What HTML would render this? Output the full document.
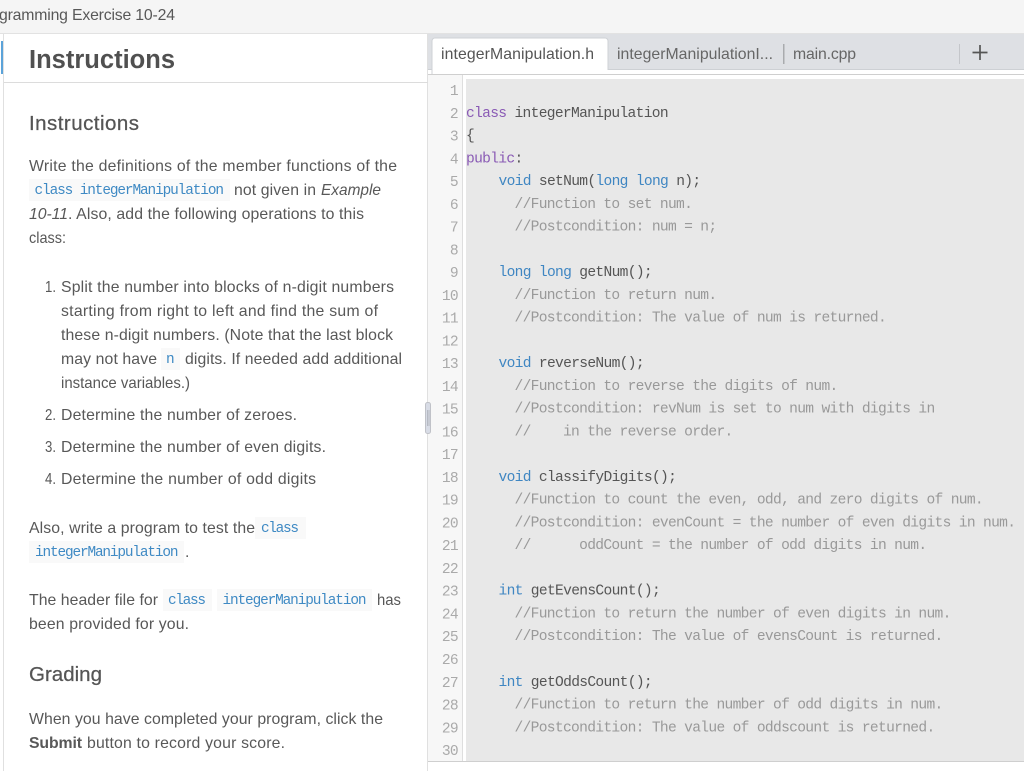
<!DOCTYPE html>
<html lang="en">
<head>
<meta charset="utf-8">
<title>Programming Exercise 10-24</title>
<style>
html,body{margin:0;padding:0;background:#fff;width:1024px;height:771px;overflow:hidden}
svg{display:block}
text{white-space:pre}
.s{font-family:"Liberation Sans",sans-serif;font-size:15.8px;fill:#585858}
.i{font-style:italic}
.b{font-weight:bold}
.c{font-family:"Liberation Mono",monospace;font-size:14.4px;fill:#3f8ac4}
.m{font-family:"Liberation Mono",monospace;font-size:14.6px;letter-spacing:-.68px;fill:#555}
.n{fill:#aaa;text-anchor:end}
.k{fill:#8a5bb5}
.t{fill:#3f86c2}
.g{fill:#999}
.h{font-family:"Liberation Sans",sans-serif;font-size:20.5px;fill:#555;stroke:#555;stroke-width:.25px}
</style>
</head>
<body>
<svg width="1024" height="771" viewBox="0 0 1024 771" xmlns="http://www.w3.org/2000/svg">
<rect width="1024" height="771" fill="#fff"/>
<rect width="1024" height="33" fill="#f5f5f5"/>
<rect y="33" width="1024" height="1" fill="#e2e2e2"/>
<text class="s" x="-1" y="20" textLength="176">gramming Exercise 10-24</text>

<rect x="3" y="34" width="1" height="737" fill="#e0e0e0"/>
<rect x="427" y="34" width="1" height="737" fill="#e0e0e0"/>
<rect x="1" y="41" width="2" height="33" fill="#5ba3d9"/>
<rect x="4" y="82" width="424" height="1" fill="#dcdcdc"/>

<text x="29" y="68" textLength="146" font-family="Liberation Sans" font-weight="bold" font-size="25.5" fill="#505050">Instructions</text>
<text class="h" x="29" y="130" textLength="110">Instructions</text>

<text class="s" x="29" y="171" textLength="368">Write the definitions of the member functions of the</text>
<rect x="29" y="179" width="201" height="22" fill="#f9f9f9"/>
<text class="c" x="34.5" y="194" textLength="189.5">class integerManipulation</text>
<text class="s" x="234" y="195" textLength="82">not given in</text>
<text class="s i" x="321" y="195" textLength="60" lengthAdjust="spacingAndGlyphs">Example</text>
<text class="s i" x="29" y="219" textLength="39">10-11</text>
<text class="s" x="68" y="219" textLength="296">. Also, add the following operations to this</text>
<text class="s" x="29" y="243" textLength="37" lengthAdjust="spacingAndGlyphs">class:</text>

<text class="s" x="45" y="292" textLength="11" lengthAdjust="spacingAndGlyphs">1.</text>
<text class="s" x="61" y="292" textLength="333">Split the number into blocks of n-digit numbers</text>
<text class="s" x="61" y="316" textLength="317">starting from right to left and find the sum of</text>
<text class="s" x="61" y="340" textLength="332">these n-digit numbers. (Note that the last block</text>
<text class="s" x="61" y="364" textLength="96">may not have</text>
<rect x="161" y="348" width="19" height="22" fill="#f9f9f9"/>
<text class="c" x="166" y="363" textLength="8">n</text>
<text class="s" x="185" y="364" textLength="217">digits. If needed add additional</text>
<text class="s" x="61" y="388" textLength="129" lengthAdjust="spacingAndGlyphs">instance variables.)</text>
<text class="s" x="45" y="420" textLength="11" lengthAdjust="spacingAndGlyphs">2.</text>
<text class="s" x="61" y="420" textLength="236">Determine the number of zeroes.</text>
<text class="s" x="45" y="452" textLength="11" lengthAdjust="spacingAndGlyphs">3.</text>
<text class="s" x="61" y="452" textLength="265">Determine the number of even digits.</text>
<text class="s" x="45" y="484" textLength="11" lengthAdjust="spacingAndGlyphs">4.</text>
<text class="s" x="61" y="484" textLength="255">Determine the number of odd digits</text>

<text class="s" x="29" y="533" textLength="226">Also, write a program to test the</text>
<rect x="255" y="517" width="51" height="22" fill="#f9f9f9"/>
<text class="c" x="261" y="532" textLength="38">class</text>
<rect x="29" y="541" width="155" height="22" fill="#f9f9f9"/>
<text class="c" x="35" y="556" textLength="143.5">integerManipulation</text>
<text class="s" x="185" y="557">.</text>

<text class="s" x="29" y="605" textLength="129">The header file for</text>
<rect x="163" y="589" width="49" height="22" fill="#f9f9f9"/>
<text class="c" x="168" y="604" textLength="38">class</text>
<rect x="217" y="589" width="155" height="22" fill="#f9f9f9"/>
<text class="c" x="222.500" y="604" textLength="144">integerManipulation</text>
<text class="s" x="377" y="605" textLength="24" lengthAdjust="spacingAndGlyphs">has</text>
<text class="s" x="29" y="629" textLength="160">been provided for you.</text>

<text class="h" x="29" y="681" textLength="73">Grading</text>
<text class="s" x="29" y="724" textLength="354">When you have completed your program, click the</text>
<text class="s b" x="29" y="748" textLength="53">Submit</text>
<text class="s" x="87" y="748" textLength="198">button to record your score.</text>

<!-- tab bar -->
<rect x="428" y="34" width="596" height="36" fill="#dee0e4"/>
<rect x="428" y="69" width="596" height="1" fill="#cdd0d4"/>
<rect x="428" y="70" width="596" height="4" fill="#fff"/>
<rect x="428" y="74" width="596" height="1" fill="#cfcfcf"/>
<path d="M432 74V41a3 3 0 0 1 3-3H605a3 3 0 0 1 3 3V70" fill="#fff" stroke="#cfd2d6" stroke-width="1"/>
<rect x="433" y="66" width="174.500" height="8" fill="#fff"/>
<text x="441" y="59" textLength="153" font-family="Liberation Sans" font-size="15.8" fill="#555">integerManipulation.h</text>
<text x="617" y="59" textLength="156" font-family="Liberation Sans" font-size="15.8" fill="#666">integerManipulationI...</text>
<rect x="783" y="44" width="1.500" height="20" fill="#a9abae"/>
<text x="793" y="59" textLength="63" font-family="Liberation Sans" font-size="15.8" fill="#666">main.cpp</text>
<rect x="959" y="44" width="1" height="20" fill="#c4c6ca"/>
<path d="M972.500 52.500H987.500M980 45V60" stroke="#555" stroke-width="1.700" fill="none"/>

<!-- editor -->
<rect x="428" y="75" width="34" height="686" fill="#f7f7f7"/>
<rect x="462" y="75" width="1" height="686" fill="#dedede"/>
<rect x="466" y="79" width="558" height="682" fill="#e8e8e8"/>
<rect x="428" y="761" width="596" height="1" fill="#cfcfcf"/>

<rect x="425.500" y="402.500" width="5" height="31" rx="2" fill="#d8dce6" stroke="#c0c2c8"/>
<path d="M427.500 410V426M429 410V426" stroke="#a9acb4" stroke-width=".7"/>

<g class="m">
<text class="m n" x="458" y="95">1</text>
<text class="m n" x="458" y="117.800">2</text>
<text class="m n" x="458" y="140.500">3</text>
<text class="m n" x="458" y="163.300">4</text>
<text class="m n" x="458" y="186">5</text>
<text class="m n" x="458" y="208.800">6</text>
<text class="m n" x="458" y="231.600">7</text>
<text class="m n" x="458" y="254.300">8</text>
<text class="m n" x="458" y="277.100">9</text>
<text class="m n" x="458" y="299.800">10</text>
<text class="m n" x="458" y="322.600">11</text>
<text class="m n" x="458" y="345.400">12</text>
<text class="m n" x="458" y="368.100">13</text>
<text class="m n" x="458" y="390.900">14</text>
<text class="m n" x="458" y="413.600">15</text>
<text class="m n" x="458" y="436.400">16</text>
<text class="m n" x="458" y="459.200">17</text>
<text class="m n" x="458" y="481.900">18</text>
<text class="m n" x="458" y="504.700">19</text>
<text class="m n" x="458" y="527.400">20</text>
<text class="m n" x="458" y="550.200">21</text>
<text class="m n" x="458" y="573">22</text>
<text class="m n" x="458" y="595.700">23</text>
<text class="m n" x="458" y="618.500">24</text>
<text class="m n" x="458" y="641.200">25</text>
<text class="m n" x="458" y="664">26</text>
<text class="m n" x="458" y="686.800">27</text>
<text class="m n" x="458" y="709.500">28</text>
<text class="m n" x="458" y="732.300">29</text>
<text class="m n" x="458" y="755">30</text>
</g>
<g class="m" transform="translate(0,-1)">
<text class="m" x="466" y="117.800"><tspan class="k">class</tspan> integerManipulation</text>
<text class="m" x="466" y="140.500">{</text>
<text class="m" x="466" y="163.300"><tspan class="k">public</tspan>:</text>
<text class="m" x="498.500" y="186"><tspan class="t">void</tspan> setNum(<tspan class="t">long long</tspan> n);</text>
<text class="m g" x="514.500" y="208.800">//Function to set num.</text>
<text class="m g" x="514.500" y="231.600">//Postcondition: num = n;</text>
<text class="m" x="498.500" y="277.100"><tspan class="t">long long</tspan> getNum();</text>
<text class="m g" x="514.500" y="299.800">//Function to return num.</text>
<text class="m g" x="514.500" y="322.600">//Postcondition: The value of num is returned.</text>
<text class="m" x="498.500" y="368.100"><tspan class="t">void</tspan> reverseNum();</text>
<text class="m g" x="514.500" y="390.900">//Function to reverse the digits of num.</text>
<text class="m g" x="514.500" y="413.600">//Postcondition: revNum is set to num with digits in</text>
<text class="m g" x="514.500" y="436.400">//    in the reverse order.</text>
<text class="m" x="498.500" y="481.900"><tspan class="t">void</tspan> classifyDigits();</text>
<text class="m g" x="514.500" y="504.700">//Function to count the even, odd, and zero digits of num.</text>
<text class="m g" x="514.500" y="527.400">//Postcondition: evenCount = the number of even digits in num.</text>
<text class="m g" x="514.500" y="550.200">//      oddCount = the number of odd digits in num.</text>
<text class="m" x="498.500" y="595.700"><tspan class="t">int</tspan> getEvensCount();</text>
<text class="m g" x="514.500" y="618.500">//Function to return the number of even digits in num.</text>
<text class="m g" x="514.500" y="641.200">//Postcondition: The value of evensCount is returned.</text>
<text class="m" x="498.500" y="686.800"><tspan class="t">int</tspan> getOddsCount();</text>
<text class="m g" x="514.500" y="709.500">//Function to return the number of odd digits in num.</text>
<text class="m g" x="514.500" y="732.300">//Postcondition: The value of oddscount is returned.</text>
</g>
</svg>
</body>
</html>
